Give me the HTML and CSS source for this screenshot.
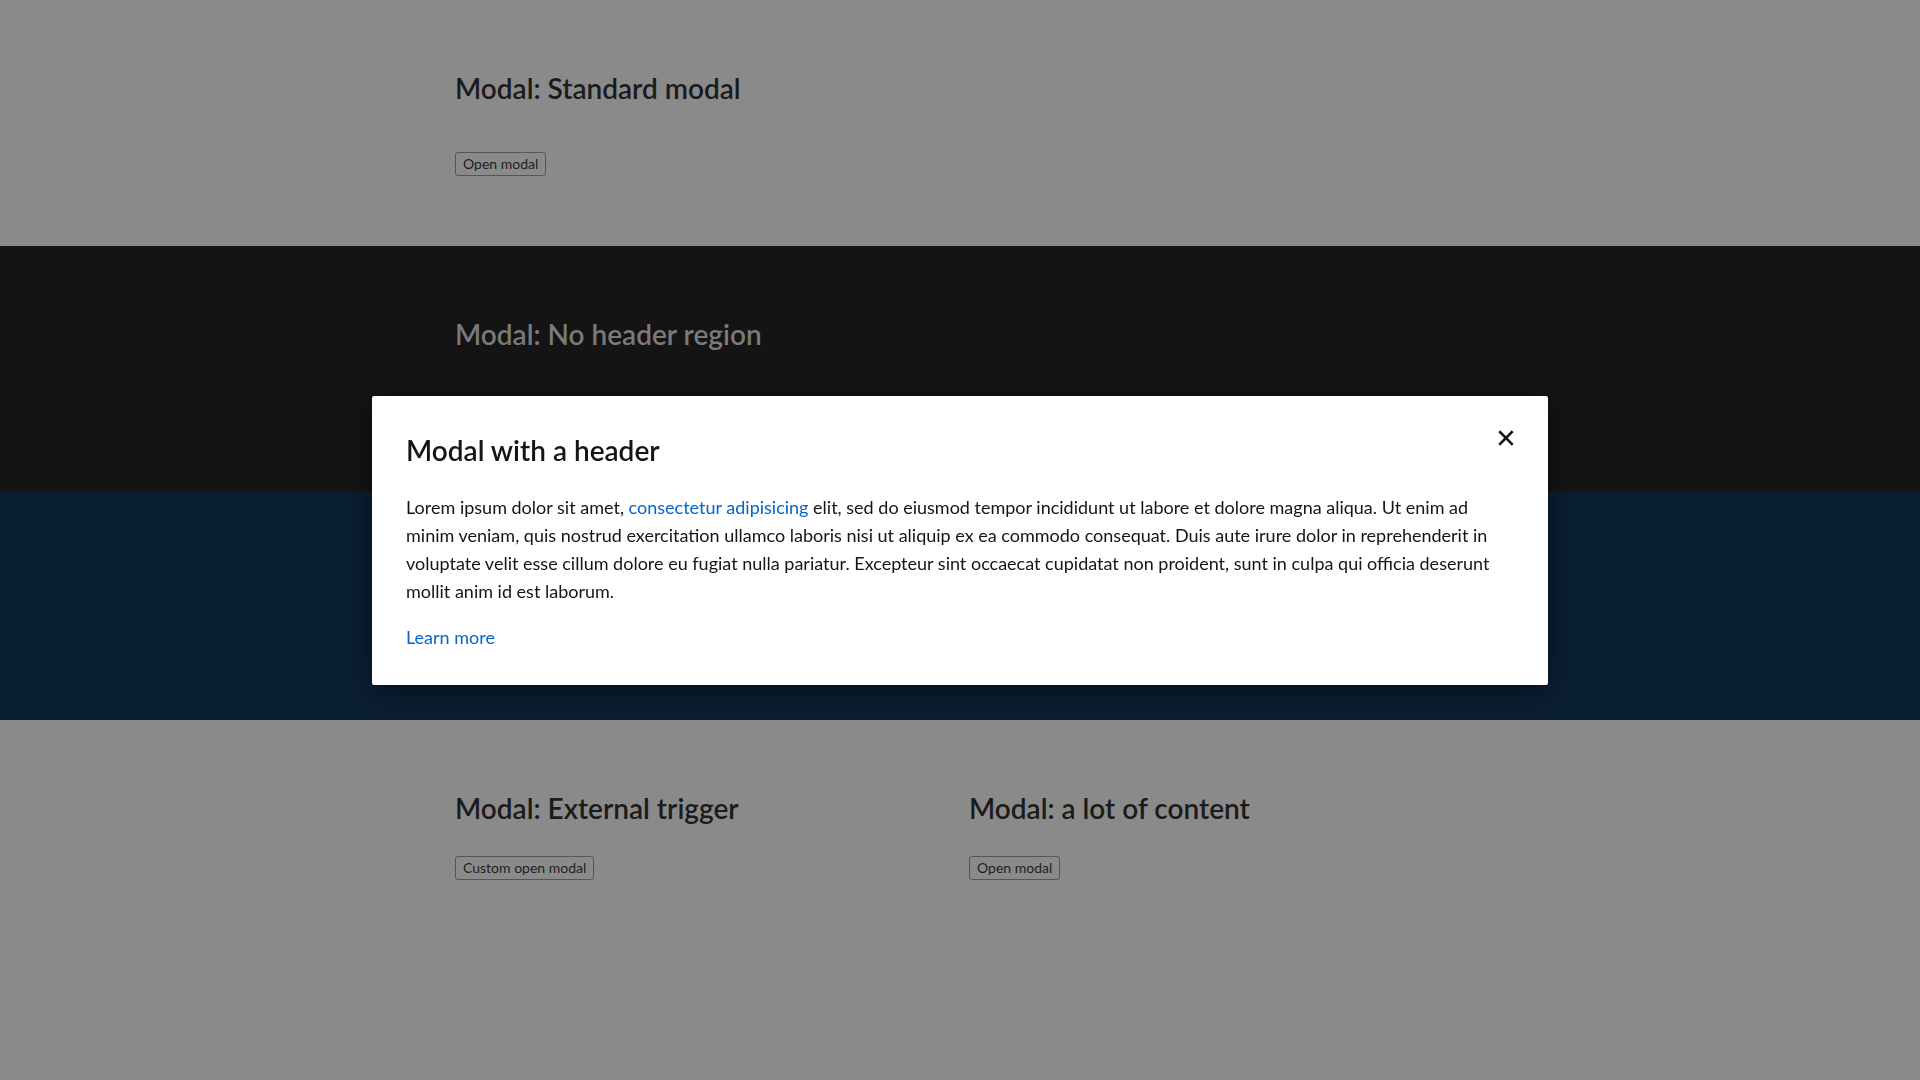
FILE: index.html
```html
<!DOCTYPE html>
<html lang="en">
<head>
<meta charset="utf-8">
<title>Modal demos</title>
<link rel="stylesheet" href="styles.css">
</head>
<body>
<main class="page">
  <section class="band band-light">
    <div class="container">
      <h2 class="demo-title">Modal: Standard modal</h2>
      <div class="demo-actions"><button class="btn" type="button">Open modal</button></div>
    </div>
  </section>
  <section class="band band-dark">
    <div class="container">
      <h2 class="demo-title">Modal: No header region</h2>
      <div class="demo-actions"><button class="btn btn-dark" type="button">Open modal</button></div>
    </div>
  </section>
  <section class="band band-blue">
    <div class="container">
      <h2 class="demo-title">Modal: Custom footer</h2>
      <div class="demo-actions"><button class="btn btn-dark" type="button">Open modal</button></div>
    </div>
  </section>
  <section class="band band-light band-last">
    <div class="container grid">
      <div class="demo">
        <h2 class="demo-title">Modal: External trigger</h2>
        <div class="demo-actions tight"><button class="btn" type="button">Custom open modal</button></div>
      </div>
      <div class="demo">
        <h2 class="demo-title">Modal: a lot of content</h2>
        <div class="demo-actions tight"><button class="btn" type="button">Open modal</button></div>
      </div>
    </div>
  </section>
</main>

<div class="backdrop">
  <div class="modal" role="dialog" aria-modal="true" aria-labelledby="modal-title">
    <button class="modal-close" type="button" aria-label="Close">
      <svg width="16" height="16" viewBox="0 0 16 16" aria-hidden="true"><path d="M2.2 2.2 L13.8 13.8 M13.8 2.2 L2.2 13.8" stroke="#151515" stroke-width="2.6" stroke-linecap="square" fill="none"/></svg>
    </button>
    <h1 class="modal-title" id="modal-title">Modal with a header</h1>
    <p class="modal-body">Lorem ipsum dolor sit amet, <a href="#" class="link">consectetur adipisicing</a> elit, sed do eiusmod tempor incididunt ut labore et dolore magna aliqua. Ut enim ad minim veniam, quis nostrud exercitation ullamco laboris nisi ut aliquip ex ea commodo consequat. Duis aute irure dolor in reprehenderit in voluptate velit esse cillum dolore eu fugiat nulla pariatur. Excepteur sint occaecat cupidatat non proident, sunt in culpa qui officia deserunt mollit anim id est laborum.</p>
    <p class="modal-footer"><a href="#" class="link">Learn more</a></p>
  </div>
</div>
</body>
</html>
```
FILE: styles.css
```css
html, body {
  margin: 0;
  padding: 0;
  height: 100%;
}
body {
  font-family: Lato, "Open Sans", "Liberation Sans", sans-serif;
  background: #8a8a8a;
  color: #1b1b1b;
}
.page {
  min-height: 100vh;
  display: flex;
  flex-direction: column;
}
.band {
  padding: 70px 0 70px;
}
.band-light {
  background: #8a8a8a;
  color: #1b1b1b;
}
.band-dark {
  background: #141414;
  color: #7a7a7a;
  padding-bottom: 69px;
}
.band-blue {
  background: #0a1e33;
  color: #5f6a77;
  padding-bottom: 53px;
}
.band-last {
  flex: 1;
}
.container {
  width: 1010px;
  margin: 0 auto;
}
.grid {
  display: grid;
  grid-template-columns: 1fr 1fr;
  column-gap: 18px;
}
.demo-title {
  margin: 0;
  font-size: 28px;
  line-height: 36px;
  font-weight: 600;
  letter-spacing: 0;
}
.demo-actions {
  margin-top: 46px;
  display: flex;
}
.demo-actions.tight {
  margin-top: 30px;
}
.btn {
  font-family: Lato, "Open Sans", "Liberation Sans", sans-serif;
  font-size: 14px;
  line-height: 16px;
  padding: 3px 7px;
  border: 1px solid #555;
  border-radius: 3px;
  background: transparent;
  color: #1f1f1f;
}
.btn-dark {
  border-color: #444;
  color: #777;
}
.backdrop {
  position: fixed;
  inset: 0;
  display: flex;
  align-items: center;
  justify-content: center;
}
.modal {
  position: relative;
  box-sizing: border-box;
  width: 1176px;
  padding: 36px 35px 34px 34px;
  background: #ffffff;
  border-radius: 2px;
  box-shadow: 0 6px 30px rgba(0, 0, 0, 0.45);
  color: #151515;
}
.modal-close {
  position: absolute;
  top: 20px;
  right: 20px;
  width: 44px;
  height: 44px;
  padding: 0;
  border: 0;
  background: transparent;
  display: flex;
  align-items: center;
  justify-content: center;
}
.modal-title {
  margin: 0;
  font-size: 28px;
  line-height: 36px;
  font-weight: 600;
  color: #151515;
}
.modal-body {
  margin: 25px 0 0;
  font-size: 18px;
  line-height: 28px;
  max-width: 1090px;
}
.modal-footer {
  margin: 18px 0 0;
  font-size: 18px;
  line-height: 28px;
}
.link {
  color: #0066cc;
  text-decoration: none;
}
```
